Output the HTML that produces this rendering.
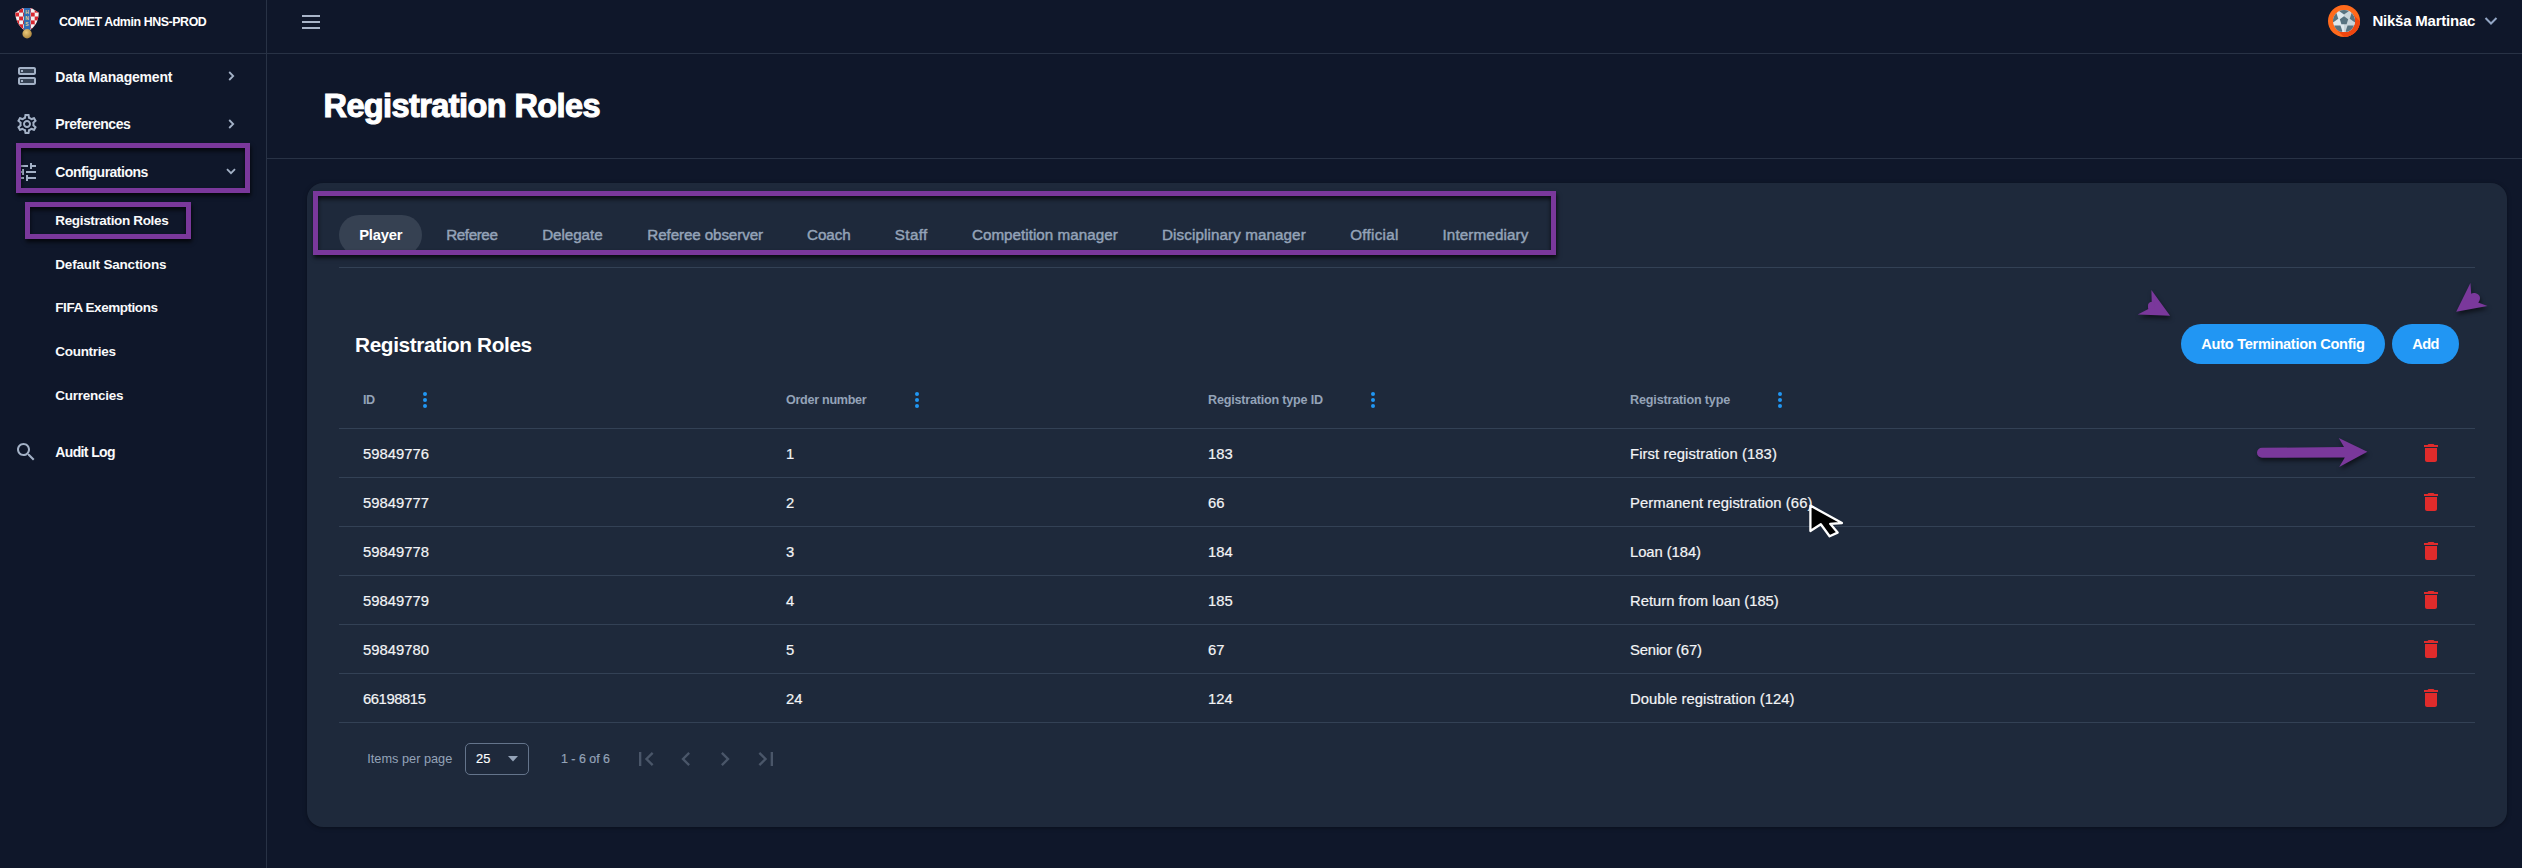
<!DOCTYPE html>
<html><head><meta charset="utf-8"><title>Registration Roles</title>
<style>
html,body{margin:0;padding:0}
body{width:2522px;height:868px;overflow:hidden;background:#0f172a;position:relative;font-family:"Liberation Sans",sans-serif}
.abs{position:absolute}
.t{position:absolute;white-space:nowrap}
.pbox{position:absolute;box-sizing:border-box;border:5px solid #7a389b;box-shadow:1px 3px 4px rgba(0,0,0,0.7), inset 0 3px 4px rgba(0,0,0,0.7)}
.btn{position:absolute;background:#2196f3;border-radius:20px}
</style></head><body>
<div class="abs" style="left:0;top:53px;width:2522px;height:1px;background:#283245"></div><div class="abs" style="left:266px;top:0;width:1px;height:868px;background:#283245"></div><div class="abs" style="left:267px;top:158px;width:2255px;height:1px;background:#283245"></div><svg class="abs" style="left:13px;top:6px" width="28" height="34" viewBox="0 0 28 34">
<defs><clipPath id="sh"><path d="M2.2 6.8 L9.8 2 L18.4 2 L25.9 6.8 C25.5 13 23.5 19 18.5 23 L14.1 26 L9.7 23 C4.7 19 2.6 13 2.2 6.8 Z"/></clipPath>
<radialGradient id="gold" cx="0.4" cy="0.35" r="0.7"><stop offset="0" stop-color="#ecc97a"/><stop offset="1" stop-color="#a8823a"/></radialGradient></defs>
<g clip-path="url(#sh)">
<rect x="0" y="0" width="28" height="30" fill="#f2f2f2"/>
<g fill="#d9262e"><rect x="2.20" y="-1.20" width="3.9" height="3.9"/><rect x="10.00" y="-1.20" width="3.9" height="3.9"/><rect x="17.80" y="-1.20" width="3.9" height="3.9"/><rect x="25.60" y="-1.20" width="3.9" height="3.9"/><rect x="-1.70" y="2.70" width="3.9" height="3.9"/><rect x="6.10" y="2.70" width="3.9" height="3.9"/><rect x="13.90" y="2.70" width="3.9" height="3.9"/><rect x="21.70" y="2.70" width="3.9" height="3.9"/><rect x="29.50" y="2.70" width="3.9" height="3.9"/><rect x="2.20" y="6.60" width="3.9" height="3.9"/><rect x="10.00" y="6.60" width="3.9" height="3.9"/><rect x="17.80" y="6.60" width="3.9" height="3.9"/><rect x="25.60" y="6.60" width="3.9" height="3.9"/><rect x="-1.70" y="10.50" width="3.9" height="3.9"/><rect x="6.10" y="10.50" width="3.9" height="3.9"/><rect x="13.90" y="10.50" width="3.9" height="3.9"/><rect x="21.70" y="10.50" width="3.9" height="3.9"/><rect x="29.50" y="10.50" width="3.9" height="3.9"/><rect x="2.20" y="14.40" width="3.9" height="3.9"/><rect x="10.00" y="14.40" width="3.9" height="3.9"/><rect x="17.80" y="14.40" width="3.9" height="3.9"/><rect x="25.60" y="14.40" width="3.9" height="3.9"/><rect x="-1.70" y="18.30" width="3.9" height="3.9"/><rect x="6.10" y="18.30" width="3.9" height="3.9"/><rect x="13.90" y="18.30" width="3.9" height="3.9"/><rect x="21.70" y="18.30" width="3.9" height="3.9"/><rect x="29.50" y="18.30" width="3.9" height="3.9"/><rect x="2.20" y="22.20" width="3.9" height="3.9"/><rect x="10.00" y="22.20" width="3.9" height="3.9"/><rect x="17.80" y="22.20" width="3.9" height="3.9"/><rect x="25.60" y="22.20" width="3.9" height="3.9"/><rect x="-1.70" y="26.10" width="3.9" height="3.9"/><rect x="6.10" y="26.10" width="3.9" height="3.9"/><rect x="13.90" y="26.10" width="3.9" height="3.9"/><rect x="21.70" y="26.10" width="3.9" height="3.9"/><rect x="29.50" y="26.10" width="3.9" height="3.9"/><rect x="2.20" y="30.00" width="3.9" height="3.9"/><rect x="10.00" y="30.00" width="3.9" height="3.9"/><rect x="17.80" y="30.00" width="3.9" height="3.9"/><rect x="25.60" y="30.00" width="3.9" height="3.9"/><rect x="-1.70" y="33.90" width="3.9" height="3.9"/><rect x="6.10" y="33.90" width="3.9" height="3.9"/><rect x="13.90" y="33.90" width="3.9" height="3.9"/><rect x="21.70" y="33.90" width="3.9" height="3.9"/><rect x="29.50" y="33.90" width="3.9" height="3.9"/></g>
<rect x="10.8" y="1" width="6.6" height="25" fill="#2f6db5"/>
<text x="14" y="8.3" font-size="5" font-family="Liberation Sans" font-weight="bold" fill="#e3cf86" text-anchor="middle">H</text>
<text x="14" y="14.3" font-size="5" font-family="Liberation Sans" font-weight="bold" fill="#e3cf86" text-anchor="middle">N</text>
<text x="14" y="20.3" font-size="5" font-family="Liberation Sans" font-weight="bold" fill="#e3cf86" text-anchor="middle">S</text>
</g>
<circle cx="14.1" cy="27.8" r="4.7" fill="url(#gold)"/>
</svg><div class="t " style="left:59.00px;top:13.70px;font-size:12.4px;line-height:16px;font-weight:bold;color:#ffffff;letter-spacing:-0.421px;">COMET Admin HNS-PROD</div>
<div class="abs" style="left:302.3px;top:15px;width:17.4px;height:2px;background:#a8b4c8"></div><div class="abs" style="left:302.3px;top:21px;width:17.4px;height:2px;background:#a8b4c8"></div><div class="abs" style="left:302.3px;top:27px;width:17.4px;height:2px;background:#a8b4c8"></div><svg class="abs" style="left:2328px;top:5px" width="32" height="32" viewBox="0 0 32 32">
<defs><clipPath id="cc"><circle cx="16" cy="16" r="16"/></clipPath><clipPath id="bc"><circle cx="16" cy="16.1" r="11"/></clipPath></defs>
<g clip-path="url(#cc)">
<rect width="32" height="32" fill="#ff6a1c"/>
<path d="M23.8 8.2 L40 24 L24 40 L8 24 Z" fill="#f0460f"/>
</g>
<g clip-path="url(#bc)"><rect x="0" y="0" width="32" height="32" fill="#dfe8ed"/><rect x="16" y="0" width="16" height="32" fill="#cad5da"/><path d="M16.00 11.20 L20.18 14.24 L18.59 19.16 L13.41 19.16 L11.82 14.24 Z" fill="#587380"/><path d="M16.00 9.60 L11.05 6.01 L12.94 0.19 L19.06 0.19 L20.95 6.01 Z" fill="#587380"/><path d="M21.71 13.75 L23.60 7.93 L29.71 7.93 L31.60 13.75 L26.65 17.34 Z" fill="#587380"/><path d="M19.53 20.45 L25.64 20.45 L27.53 26.27 L22.58 29.86 L17.64 26.27 Z" fill="#587380"/><path d="M12.47 20.45 L14.36 26.27 L9.42 29.86 L4.47 26.27 L6.36 20.45 Z" fill="#587380"/><path d="M10.29 13.75 L5.35 17.34 L0.40 13.75 L2.29 7.93 L8.40 7.93 Z" fill="#587380"/></g>
</svg><div class="t " style="left:2372.40px;top:11.10px;font-size:15px;line-height:20px;font-weight:bold;color:#ffffff;letter-spacing:-0.220px;">Nikša Martinac</div>
<svg class="abs" style="left:2484px;top:16px" width="14" height="10" viewBox="0 0 14 10"><path d="M1.5 2 L7 7.5 L12.5 2" fill="none" stroke="#93a6c4" stroke-width="2"/></svg><svg class="abs" style="left:15px;top:64px" width="24" height="24" viewBox="0 0 24 24" fill="#a3b1c6"><rect x="5" y="5" width="14" height="4" fill="#354153"/><rect x="5" y="15" width="14" height="4" fill="#354153"/><path d="M19 13H5c-1.1 0-2 .9-2 2v4c0 1.1.9 2 2 2h14c1.1 0 2-.9 2-2v-4c0-1.1-.9-2-2-2zm0 6H5v-4h14v4zm0-16H5c-1.1 0-2 .9-2 2v4c0 1.1.9 2 2 2h14c1.1 0 2-.9 2-2V5c0-1.1-.9-2-2-2zm0 6H5V5h14v4z"/><rect x="6" y="16" width="2" height="2"/><rect x="6" y="6" width="2" height="2"/></svg><div class="t " style="left:55.30px;top:67.75px;font-size:14px;line-height:18px;font-weight:bold;color:#f9fafb;letter-spacing:-0.187px;">Data Management</div>
<svg class="abs" style="left:227px;top:70px" width="8" height="12" viewBox="0 0 8 12"><path d="M2.2 2 L6.2 6 L2.2 10" fill="none" stroke="#a3b1c6" stroke-width="1.8"/></svg><svg class="abs" style="left:15px;top:111.8px" width="24" height="24" viewBox="0 0 24 24" fill="#a3b1c6"><path d="M19.43 12.98c.04-.32.07-.64.07-.98 0-.34-.03-.66-.07-.98l2.11-1.65c.19-.15.24-.42.12-.64l-2-3.46c-.09-.16-.26-.25-.44-.25-.06 0-.12.01-.17.03l-2.49 1c-.52-.4-1.08-.73-1.69-.98l-.38-2.65C14.46 2.18 14.25 2 14 2h-4c-.25 0-.46.18-.49.42l-.38 2.65c-.61.25-1.17.59-1.69.98l-2.49-1c-.06-.02-.12-.03-.18-.03-.17 0-.34.09-.43.25l-2 3.46c-.13.22-.07.49.12.64l2.11 1.65c-.04.32-.07.65-.07.98 0 .33.03.66.07.98l-2.11 1.65c-.19.15-.24.42-.12.64l2 3.46c.09.16.26.25.44.25.06 0 .12-.01.17-.03l2.49-1c.52.4 1.08.73 1.69.98l.38 2.65c.03.24.24.42.49.42h4c.25 0 .46-.18.49-.42l.38-2.65c.61-.25 1.170-.59 1.69-.98l2.49 1c.06.02.12.03.18.03.17 0 .34-.09.43-.25l2-3.46c.12-.22.07-.49-.12-.64l-2.11-1.650zm-1.98-1.71c.04.31.05.52.05.73 0 .21-.02.43-.05.73l-.14 1.13.89.7 1.08.84-.7 1.21-1.27-.51-1.04-.42-.9.68c-.43.32-.84.56-1.250.73l-1.06.43-.16 1.13-.2 1.35h-1.4l-.19-1.35-.16-1.13-1.06-.43c-.43-.18-.83-.41-1.23-.71l-.91-.7-1.06.43-1.27.51-.7-1.21 1.08-.84.89-.7-.14-1.13c-.03-.31-.05-.54-.05-.74s.02-.43.05-.73l.14-1.13-.89-.7-1.08-.84.7-1.21 1.27.51 1.04.42.9-.68c.43-.32.84-.56 1.25-.73l1.06-.43.16-1.13.2-1.35h1.39l.19 1.35.16 1.13 1.06.43c.43.18.83.41 1.23.71l.91.7 1.06-.43 1.27-.51.7 1.21-1.07.85-.89.7.14 1.13zM12 8c-2.21 0-4 1.79-4 4s1.79 4 4 4 4-1.79 4-4-1.79-4-4-4zm0 6c-1.1 0-2-.9-2-2s.9-2 2-2 2 .9 2 2-.9 2-2 2z"/></svg><div class="t " style="left:55.30px;top:115.25px;font-size:14px;line-height:18px;font-weight:bold;color:#f9fafb;letter-spacing:-0.470px;">Preferences</div>
<svg class="abs" style="left:227px;top:118px" width="8" height="12" viewBox="0 0 8 12"><path d="M2.2 2 L6.2 6 L2.2 10" fill="none" stroke="#a3b1c6" stroke-width="1.8"/></svg><svg class="abs" style="left:15px;top:160px" width="24" height="24" viewBox="0 0 24 24" fill="#a3b1c6"><path d="M3 17v2h6v-2H3zM3 5v2h10V5H3zm10 16v-2h8v-2h-8v-2h-2v6h2zM7 9v2H3v2h4v2h2V9H7zm14 4v-2H11v2h10zm-6-4h2V7h4V5h-4V3h-2v6z"/></svg><div class="t " style="left:55.30px;top:163.45px;font-size:14px;line-height:18px;font-weight:bold;color:#f9fafb;letter-spacing:-0.503px;">Configurations</div>
<svg class="abs" style="left:225px;top:166px" width="12" height="10" viewBox="0 0 12 10"><path d="M2 3.2 L6 7.2 L10 3.2" fill="none" stroke="#a3b1c6" stroke-width="1.8"/></svg><div class="pbox" style="left:16px;top:143px;width:234px;height:50px"></div><div class="t " style="left:55.30px;top:211.72px;font-size:13.5px;line-height:18px;font-weight:bold;color:#f9fafb;letter-spacing:-0.348px;">Registration Roles</div>
<div class="t " style="left:55.30px;top:255.62px;font-size:13.5px;line-height:18px;font-weight:bold;color:#f9fafb;letter-spacing:-0.178px;">Default Sanctions</div>
<div class="t " style="left:55.30px;top:299.42px;font-size:13.5px;line-height:18px;font-weight:bold;color:#f9fafb;letter-spacing:-0.454px;">FIFA Exemptions</div>
<div class="t " style="left:55.30px;top:343.42px;font-size:13.5px;line-height:18px;font-weight:bold;color:#f9fafb;letter-spacing:-0.301px;">Countries</div>
<div class="t " style="left:55.30px;top:387.42px;font-size:13.5px;line-height:18px;font-weight:bold;color:#f9fafb;letter-spacing:-0.263px;">Currencies</div>
<div class="pbox" style="left:25px;top:202px;width:166px;height:37px"></div><svg class="abs" style="left:14px;top:440px" width="24" height="24" viewBox="0 0 24 24" fill="#a3b1c6"><path d="M15.5 14h-.79l-.28-.27C15.41 12.59 16 11.11 16 9.5 16 5.91 13.09 3 9.5 3S3 5.91 3 9.5 5.91 16 9.5 16c1.61 0 3.09-.59 4.23-1.57l.27.28v.79l5 4.99L20.49 19l-4.99-5zm-6 0C7.01 14 5 11.99 5 9.5S7.01 5 9.5 5 14 7.01 14 9.5 11.99 14 9.5 14z"/></svg><div class="t " style="left:55.30px;top:443.25px;font-size:14px;line-height:18px;font-weight:bold;color:#f9fafb;letter-spacing:-0.635px;">Audit Log</div>
<div class="t " style="left:323.50px;top:84.84px;font-size:32.5px;line-height:42px;font-weight:bold;color:#ffffff;-webkit-text-stroke:1.1px #ffffff;letter-spacing:-0.591px;">Registration Roles</div>
<div class="abs" style="left:307px;top:183px;width:2200px;height:644px;background:#1e293b;border-radius:16px;box-shadow:0 1px 4px rgba(0,0,0,0.35)"></div><div class="abs" style="left:339px;top:215px;width:83px;height:40px;border-radius:20px;background:#364152"></div><div class="t " style="left:280.70px;top:225.87px;font-size:14.8px;line-height:19px;font-weight:bold;color:#ffffff;width:200px;text-align:center;letter-spacing:-0.223px;">Player</div>
<div class="t " style="left:371.85px;top:225.23px;font-size:15.2px;line-height:20px;font-weight:normal;color:#94a3b8;width:200px;text-align:center;-webkit-text-stroke:0.45px #94a3b8;letter-spacing:-0.397px;">Referee</div>
<div class="t " style="left:472.40px;top:225.23px;font-size:15.2px;line-height:20px;font-weight:normal;color:#94a3b8;width:200px;text-align:center;-webkit-text-stroke:0.45px #94a3b8;letter-spacing:-0.056px;">Delegate</div>
<div class="t " style="left:605.15px;top:225.23px;font-size:15.2px;line-height:20px;font-weight:normal;color:#94a3b8;width:200px;text-align:center;-webkit-text-stroke:0.45px #94a3b8;letter-spacing:-0.109px;">Referee observer</div>
<div class="t " style="left:728.80px;top:225.23px;font-size:15.2px;line-height:20px;font-weight:normal;color:#94a3b8;width:200px;text-align:center;-webkit-text-stroke:0.45px #94a3b8;letter-spacing:-0.068px;">Coach</div>
<div class="t " style="left:811.25px;top:225.23px;font-size:15.2px;line-height:20px;font-weight:normal;color:#94a3b8;width:200px;text-align:center;-webkit-text-stroke:0.45px #94a3b8;letter-spacing:0.383px;">Staff</div>
<div class="t " style="left:944.85px;top:225.23px;font-size:15.2px;line-height:20px;font-weight:normal;color:#94a3b8;width:200px;text-align:center;-webkit-text-stroke:0.45px #94a3b8;letter-spacing:0.030px;">Competition manager</div>
<div class="t " style="left:1133.95px;top:225.23px;font-size:15.2px;line-height:20px;font-weight:normal;color:#94a3b8;width:200px;text-align:center;-webkit-text-stroke:0.45px #94a3b8;letter-spacing:0.099px;">Disciplinary manager</div>
<div class="t " style="left:1274.45px;top:225.23px;font-size:15.2px;line-height:20px;font-weight:normal;color:#94a3b8;width:200px;text-align:center;-webkit-text-stroke:0.45px #94a3b8;letter-spacing:0.290px;">Official</div>
<div class="t " style="left:1385.50px;top:225.23px;font-size:15.2px;line-height:20px;font-weight:normal;color:#94a3b8;width:200px;text-align:center;-webkit-text-stroke:0.45px #94a3b8;letter-spacing:0.144px;">Intermediary</div>
<div class="abs" style="left:339px;top:267px;width:2136px;height:1px;background:#334155"></div><div class="pbox" style="left:313px;top:191px;width:1243px;height:64px"></div><div class="t " style="left:355.00px;top:330.59px;font-size:20.8px;line-height:27px;font-weight:bold;color:#ffffff;letter-spacing:-0.387px;">Registration Roles</div>
<div class="btn" style="left:2181px;top:324px;width:204px;height:40px"></div><div class="t " style="left:2181.00px;top:334.54px;font-size:14.6px;line-height:19px;font-weight:bold;color:#ffffff;width:204px;text-align:center;letter-spacing:-0.284px;">Auto Termination Config</div>
<div class="btn" style="left:2392px;top:324px;width:67px;height:40px"></div><div class="t " style="left:2392.00px;top:334.54px;font-size:14.6px;line-height:19px;font-weight:bold;color:#ffffff;width:67px;text-align:center;letter-spacing:-0.627px;">Add</div>
<div class="t " style="left:363.00px;top:391.83px;font-size:12.6px;line-height:16px;font-weight:bold;color:#94a3b8;letter-spacing:-0.550px;">ID</div>
<svg class="abs" style="left:423px;top:391px" width="4" height="18" viewBox="0 0 4 18" fill="#2196f3"><circle cx="2" cy="3" r="2"/><circle cx="2" cy="9" r="2"/><circle cx="2" cy="15" r="2"/></svg><div class="t " style="left:786.00px;top:391.83px;font-size:12.6px;line-height:16px;font-weight:bold;color:#94a3b8;letter-spacing:-0.301px;">Order number</div>
<svg class="abs" style="left:915px;top:391px" width="4" height="18" viewBox="0 0 4 18" fill="#2196f3"><circle cx="2" cy="3" r="2"/><circle cx="2" cy="9" r="2"/><circle cx="2" cy="15" r="2"/></svg><div class="t " style="left:1208.00px;top:391.83px;font-size:12.6px;line-height:16px;font-weight:bold;color:#94a3b8;letter-spacing:-0.206px;">Registration type ID</div>
<svg class="abs" style="left:1371px;top:391px" width="4" height="18" viewBox="0 0 4 18" fill="#2196f3"><circle cx="2" cy="3" r="2"/><circle cx="2" cy="9" r="2"/><circle cx="2" cy="15" r="2"/></svg><div class="t " style="left:1630.00px;top:391.83px;font-size:12.6px;line-height:16px;font-weight:bold;color:#94a3b8;letter-spacing:-0.166px;">Registration type</div>
<svg class="abs" style="left:1778px;top:391px" width="4" height="18" viewBox="0 0 4 18" fill="#2196f3"><circle cx="2" cy="3" r="2"/><circle cx="2" cy="9" r="2"/><circle cx="2" cy="15" r="2"/></svg><div class="abs" style="left:339px;top:428px;width:2136px;height:1px;background:#334155"></div><div class="t " style="left:363.00px;top:444.57px;font-size:14.8px;line-height:19px;font-weight:normal;color:#f3f4f6;-webkit-text-stroke:0.2px #f3f4f6;letter-spacing:0.019px;">59849776</div>
<div class="t " style="left:786.00px;top:444.57px;font-size:14.8px;line-height:19px;font-weight:normal;color:#f3f4f6;-webkit-text-stroke:0.2px #f3f4f6;">1</div>
<div class="t " style="left:1208.00px;top:444.57px;font-size:14.8px;line-height:19px;font-weight:normal;color:#f3f4f6;-webkit-text-stroke:0.2px #f3f4f6;">183</div>
<div class="t " style="left:1630.00px;top:444.57px;font-size:14.8px;line-height:19px;font-weight:normal;color:#f3f4f6;-webkit-text-stroke:0.2px #f3f4f6;letter-spacing:0.093px;">First registration (183)</div>
<svg class="abs" style="left:2419px;top:440.5px" width="24" height="24" viewBox="0 0 24 24" fill="#e02b2b"><path d="M6 19c0 1.1.9 2 2 2h8c1.1 0 2-.9 2-2V7H6v12zM19 4h-3.5l-1-1h-5l-1 1H5v2h14V4z"/></svg><div class="abs" style="left:339px;top:477px;width:2136px;height:1px;background:#334155"></div><div class="t " style="left:363.00px;top:493.57px;font-size:14.8px;line-height:19px;font-weight:normal;color:#f3f4f6;-webkit-text-stroke:0.2px #f3f4f6;letter-spacing:0.019px;">59849777</div>
<div class="t " style="left:786.00px;top:493.57px;font-size:14.8px;line-height:19px;font-weight:normal;color:#f3f4f6;-webkit-text-stroke:0.2px #f3f4f6;">2</div>
<div class="t " style="left:1208.00px;top:493.57px;font-size:14.8px;line-height:19px;font-weight:normal;color:#f3f4f6;-webkit-text-stroke:0.2px #f3f4f6;">66</div>
<div class="t " style="left:1630.00px;top:493.57px;font-size:14.8px;line-height:19px;font-weight:normal;color:#f3f4f6;-webkit-text-stroke:0.2px #f3f4f6;letter-spacing:0.087px;">Permanent registration (66)</div>
<svg class="abs" style="left:2419px;top:489.5px" width="24" height="24" viewBox="0 0 24 24" fill="#e02b2b"><path d="M6 19c0 1.1.9 2 2 2h8c1.1 0 2-.9 2-2V7H6v12zM19 4h-3.5l-1-1h-5l-1 1H5v2h14V4z"/></svg><div class="abs" style="left:339px;top:526px;width:2136px;height:1px;background:#334155"></div><div class="t " style="left:363.00px;top:542.57px;font-size:14.8px;line-height:19px;font-weight:normal;color:#f3f4f6;-webkit-text-stroke:0.2px #f3f4f6;letter-spacing:0.019px;">59849778</div>
<div class="t " style="left:786.00px;top:542.57px;font-size:14.8px;line-height:19px;font-weight:normal;color:#f3f4f6;-webkit-text-stroke:0.2px #f3f4f6;">3</div>
<div class="t " style="left:1208.00px;top:542.57px;font-size:14.8px;line-height:19px;font-weight:normal;color:#f3f4f6;-webkit-text-stroke:0.2px #f3f4f6;">184</div>
<div class="t " style="left:1630.00px;top:542.57px;font-size:14.8px;line-height:19px;font-weight:normal;color:#f3f4f6;-webkit-text-stroke:0.2px #f3f4f6;letter-spacing:-0.059px;">Loan (184)</div>
<svg class="abs" style="left:2419px;top:538.5px" width="24" height="24" viewBox="0 0 24 24" fill="#e02b2b"><path d="M6 19c0 1.1.9 2 2 2h8c1.1 0 2-.9 2-2V7H6v12zM19 4h-3.5l-1-1h-5l-1 1H5v2h14V4z"/></svg><div class="abs" style="left:339px;top:575px;width:2136px;height:1px;background:#334155"></div><div class="t " style="left:363.00px;top:591.57px;font-size:14.8px;line-height:19px;font-weight:normal;color:#f3f4f6;-webkit-text-stroke:0.2px #f3f4f6;letter-spacing:0.019px;">59849779</div>
<div class="t " style="left:786.00px;top:591.57px;font-size:14.8px;line-height:19px;font-weight:normal;color:#f3f4f6;-webkit-text-stroke:0.2px #f3f4f6;">4</div>
<div class="t " style="left:1208.00px;top:591.57px;font-size:14.8px;line-height:19px;font-weight:normal;color:#f3f4f6;-webkit-text-stroke:0.2px #f3f4f6;">185</div>
<div class="t " style="left:1630.00px;top:591.57px;font-size:14.8px;line-height:19px;font-weight:normal;color:#f3f4f6;-webkit-text-stroke:0.2px #f3f4f6;letter-spacing:-0.004px;">Return from loan (185)</div>
<svg class="abs" style="left:2419px;top:587.5px" width="24" height="24" viewBox="0 0 24 24" fill="#e02b2b"><path d="M6 19c0 1.1.9 2 2 2h8c1.1 0 2-.9 2-2V7H6v12zM19 4h-3.5l-1-1h-5l-1 1H5v2h14V4z"/></svg><div class="abs" style="left:339px;top:624px;width:2136px;height:1px;background:#334155"></div><div class="t " style="left:363.00px;top:640.57px;font-size:14.8px;line-height:19px;font-weight:normal;color:#f3f4f6;-webkit-text-stroke:0.2px #f3f4f6;letter-spacing:0.019px;">59849780</div>
<div class="t " style="left:786.00px;top:640.57px;font-size:14.8px;line-height:19px;font-weight:normal;color:#f3f4f6;-webkit-text-stroke:0.2px #f3f4f6;">5</div>
<div class="t " style="left:1208.00px;top:640.57px;font-size:14.8px;line-height:19px;font-weight:normal;color:#f3f4f6;-webkit-text-stroke:0.2px #f3f4f6;">67</div>
<div class="t " style="left:1630.00px;top:640.57px;font-size:14.8px;line-height:19px;font-weight:normal;color:#f3f4f6;-webkit-text-stroke:0.2px #f3f4f6;letter-spacing:-0.128px;">Senior (67)</div>
<svg class="abs" style="left:2419px;top:636.5px" width="24" height="24" viewBox="0 0 24 24" fill="#e02b2b"><path d="M6 19c0 1.1.9 2 2 2h8c1.1 0 2-.9 2-2V7H6v12zM19 4h-3.5l-1-1h-5l-1 1H5v2h14V4z"/></svg><div class="abs" style="left:339px;top:673px;width:2136px;height:1px;background:#334155"></div><div class="t " style="left:363.00px;top:689.57px;font-size:14.8px;line-height:19px;font-weight:normal;color:#f3f4f6;-webkit-text-stroke:0.2px #f3f4f6;letter-spacing:-0.419px;">66198815</div>
<div class="t " style="left:786.00px;top:689.57px;font-size:14.8px;line-height:19px;font-weight:normal;color:#f3f4f6;-webkit-text-stroke:0.2px #f3f4f6;">24</div>
<div class="t " style="left:1208.00px;top:689.57px;font-size:14.8px;line-height:19px;font-weight:normal;color:#f3f4f6;-webkit-text-stroke:0.2px #f3f4f6;">124</div>
<div class="t " style="left:1630.00px;top:689.57px;font-size:14.8px;line-height:19px;font-weight:normal;color:#f3f4f6;-webkit-text-stroke:0.2px #f3f4f6;letter-spacing:0.068px;">Double registration (124)</div>
<svg class="abs" style="left:2419px;top:685.5px" width="24" height="24" viewBox="0 0 24 24" fill="#e02b2b"><path d="M6 19c0 1.1.9 2 2 2h8c1.1 0 2-.9 2-2V7H6v12zM19 4h-3.5l-1-1h-5l-1 1H5v2h14V4z"/></svg><div class="abs" style="left:339px;top:722px;width:2136px;height:1px;background:#334155"></div><div class="t " style="left:367.30px;top:749.99px;font-size:12.74px;line-height:17px;font-weight:normal;color:#94a3b8;">Items per page</div>
<div class="abs" style="left:465px;top:743px;width:62px;height:30px;border:1px solid #64748b;border-radius:5px"></div><div class="t " style="left:476.00px;top:749.94px;font-size:12.86px;line-height:17px;font-weight:normal;color:#ffffff;-webkit-text-stroke:0.15px #fff;">25</div>
<svg class="abs" style="left:507px;top:755px" width="12" height="8" viewBox="0 0 12 8"><path d="M1 1 L11 1 L6 6.5 Z" fill="#94a3b8"/></svg><div class="t " style="left:561.00px;top:750.60px;font-size:12.42px;line-height:16px;font-weight:normal;color:#94a3b8;-webkit-text-stroke:0.2px #94a3b8;">1 - 6 of 6</div>
<svg class="abs" style="left:632px;top:745px" width="28" height="28" viewBox="0 0 24 24" fill="#4a5669"><path d="M18.41 16.59L13.82 12l4.59-4.59L17 6l-6 6 6 6zM6 6h2v12H6z"/></svg><svg class="abs" style="left:672px;top:745px" width="28" height="28" viewBox="0 0 24 24" fill="#4a5669"><path d="M15.41 7.41L14 6l-6 6 6 6 1.41-1.41L10.83 12z"/></svg><svg class="abs" style="left:711px;top:745px" width="28" height="28" viewBox="0 0 24 24" fill="#4a5669"><path d="M10 6L8.59 7.41 13.17 12l-4.58 4.59L10 18l6-6z"/></svg><svg class="abs" style="left:751.5px;top:745px" width="28" height="28" viewBox="0 0 24 24" fill="#4a5669"><path d="M5.59 7.41L10.18 12l-4.59 4.59L7 18l6-6-6-6zM16 6h2v12h-2z"/></svg><svg class="abs" style="left:0;top:0;filter:drop-shadow(1px 3px 2px rgba(0,0,0,0.55))" width="2522" height="868" viewBox="0 0 2522 868">
<path d="M2151.4 290 L2170.1 315.7 L2137.8 314.6 L2148.3 309 C2147.5 306 2148.5 302.8 2151.7 301.7 Z" fill="#7a389b"/><circle cx="2151.6" cy="305.4" r="3.5" fill="#7a389b"/>
<path d="M2470.4 283 L2471.2 293.7 C2474 292 2480 294 2480 298 C2480 300 2479 301.5 2478.2 302.5 L2487.5 306.1 L2456.2 311.8 Z" fill="#7a389b"/>
<path d="M2262 447.8 L2344 447 L2338.8 437.9 L2367.4 451.8 L2339.2 466.9 L2344.8 457.4 L2262 457.8 A5 5 0 0 1 2262 447.8 Z" fill="#7a389b"/>
</svg><svg class="abs" style="left:0;top:0" width="2522" height="868" viewBox="0 0 2522 868">
<path d="M1810.4 505.6 L1810.4 531 L1820.8 524.2 L1829.6 536.3 L1837.6 532.6 L1830.2 523.8 L1842 523 Z" fill="#000" stroke="#fff" stroke-width="2.3" stroke-linejoin="round"/>
</svg>
</body></html>
